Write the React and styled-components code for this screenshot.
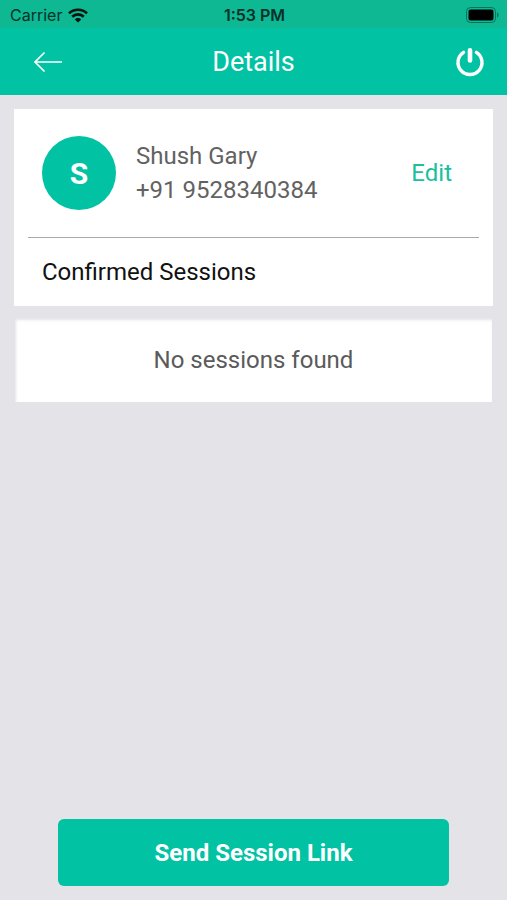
import React from 'react'
import styled, { createGlobalStyle } from 'styled-components'

const green = '#02c2a4'

const GlobalStyle = createGlobalStyle`
    * {
        box-sizing: border-box;
    }
    body {
        margin: 0;
        background: #e4e3e8;
        font-family: Roboto, "Liberation Sans", sans-serif;
    }
    h1, h2, p {
        margin: 0;
        font-weight: 400;
    }
    button {
        border: none;
        padding: 0;
        background: none;
        font-family: inherit;
        cursor: pointer;
    }
    svg {
        display: block;
    }
`

const Screen = styled.div`
    min-height: 100vh;
    display: flex;
    flex-direction: column;
`

const StatusBar = styled.div`
    height: 28px;
    padding: 2px 8px 0 10px;
    display: grid;
    grid-template-columns: 1fr auto 1fr;
    align-items: center;
    background: #0db892;
    color: #06302a;
    font-family: Inter, "Liberation Sans", sans-serif;
    font-size: 16px;
`

const Carrier = styled.div`
    display: flex;
    align-items: center;
    gap: 6px;
`

const Time = styled.span`
    font-weight: 600;
`

const Battery = styled.svg`
    justify-self: end;
`

const Header = styled.header`
    height: 67px;
    padding: 0 22px;
    display: grid;
    grid-template-columns: 1fr auto 1fr;
    align-items: center;
    background: ${green};
    color: white;
`

const Title = styled.h1`
    font-size: 27px;
    line-height: 32px;
`

const IconButton = styled.button`
    justify-self: ${props => props.$side};
    color: white;
    && {
        padding: ${props => props.$side === 'start' ? '10px 11px' : '0'};
    }
`

const Content = styled.main`
    flex: 1;
    padding: 14px;
    display: flex;
    flex-direction: column;
    gap: 12px;
`

const Card = styled.section`
    padding: 0 14px;
    background: white;
`

const Profile = styled.div`
    padding: 27px 27px 27px 14px;
    display: flex;
    align-items: center;
    border-bottom: 1px solid #a9a9a9;
`

const Avatar = styled.div`
    width: 74px;
    height: 74px;
    margin-right: 20px;
    display: flex;
    justify-content: center;
    align-items: center;
    border-radius: 50%;
    background: ${green};
    color: white;
    font-size: 30px;
    font-weight: 700;
`

const Contact = styled.div`
    flex: 1;
    color: #626262;
    font-size: 24px;
    line-height: 34px;
`

const EditButton = styled.button`
    color: #1abf9f;
    font-size: 24px;
    line-height: 34px;
`

const SectionTitle = styled.h2`
    padding: 17px 14px;
    color: #111;
    font-size: 24px;
    line-height: 34px;
`

const EmptyCard = styled.section`
    margin: 0 1px;
    padding: 25px 0;
    background: white;
    box-shadow: inset 1px 2px 3px #e4e3e8;
    color: #5a5a5a;
    font-size: 24px;
    line-height: 34px;
    text-align: center;
`

const Footer = styled.footer`
    padding: 0 58px 14px;
`

const SendButton = styled.button`
    width: 100%;
    height: 67px;
    border-radius: 6px;
    && {
        background: ${green};
    }
    color: white;
    font-size: 24px;
    font-weight: 700;
`

const WifiIcon = () => (
    <svg width="20" height="15" viewBox="0 0 20 15" fill="none" stroke="#03120f" strokeWidth="2.6">
        <path d="M1 5.4C6 .5 14 .5 19 5.4" />
        <path d="M4.2 8.8C7.6 5.6 12.4 5.6 15.8 8.8" />
        <path d="M10 14.6L6.8 11.4Q10 8.8 13.2 11.4Z" fill="#03120f" stroke="none" />
    </svg>
)

const BatteryIcon = () => (
    <Battery width="33" height="16" viewBox="0 0 33 16">
        <rect x="0.5" y="0.5" width="29" height="15" rx="4" fill="none" stroke="#07715a" />
        <rect x="2.5" y="2.5" width="25" height="11" rx="2" fill="black" />
        <path d="M31 5.5Q32.6 6.4 32.6 8T31 10.5Z" fill="#07715a" />
    </Battery>
)

const BackIcon = () => (
    <svg width="30" height="22" viewBox="0 0 30 22" fill="none" stroke="currentColor" strokeWidth="1.7">
        <path d="M29 11H2M11.5 1.5L2 11L11.5 20.5" />
    </svg>
)

const PowerIcon = () => (
    <svg width="30" height="30" viewBox="0 0 30 30" fill="none" stroke="currentColor" strokeLinecap="round">
        <path d="M8.6 5.4A12 12 0 1 0 21.4 5.4" strokeWidth="3.4" />
        <path d="M15 3.4V13.4" strokeWidth="4.6" />
    </svg>
)

const App = () => {
    return (
        <Screen>
            <GlobalStyle />
            <StatusBar>
                <Carrier>
                    Carrier
                    <WifiIcon />
                </Carrier>
                <Time>1:53 PM</Time>
                <BatteryIcon />
            </StatusBar>
            <Header>
                <IconButton $side="start" aria-label="Back"><BackIcon /></IconButton>
                <Title>Details</Title>
                <IconButton $side="end" aria-label="Log out"><PowerIcon /></IconButton>
            </Header>
            <Content>
                <Card>
                    <Profile>
                        <Avatar>S</Avatar>
                        <Contact>
                            <p>Shush Gary</p>
                            <p>+91 9528340384</p>
                        </Contact>
                        <EditButton>Edit</EditButton>
                    </Profile>
                    <SectionTitle>Confirmed Sessions</SectionTitle>
                </Card>
                <EmptyCard>No sessions found</EmptyCard>
            </Content>
            <Footer>
                <SendButton>Send Session Link</SendButton>
            </Footer>
        </Screen>
    )
}

export default App
